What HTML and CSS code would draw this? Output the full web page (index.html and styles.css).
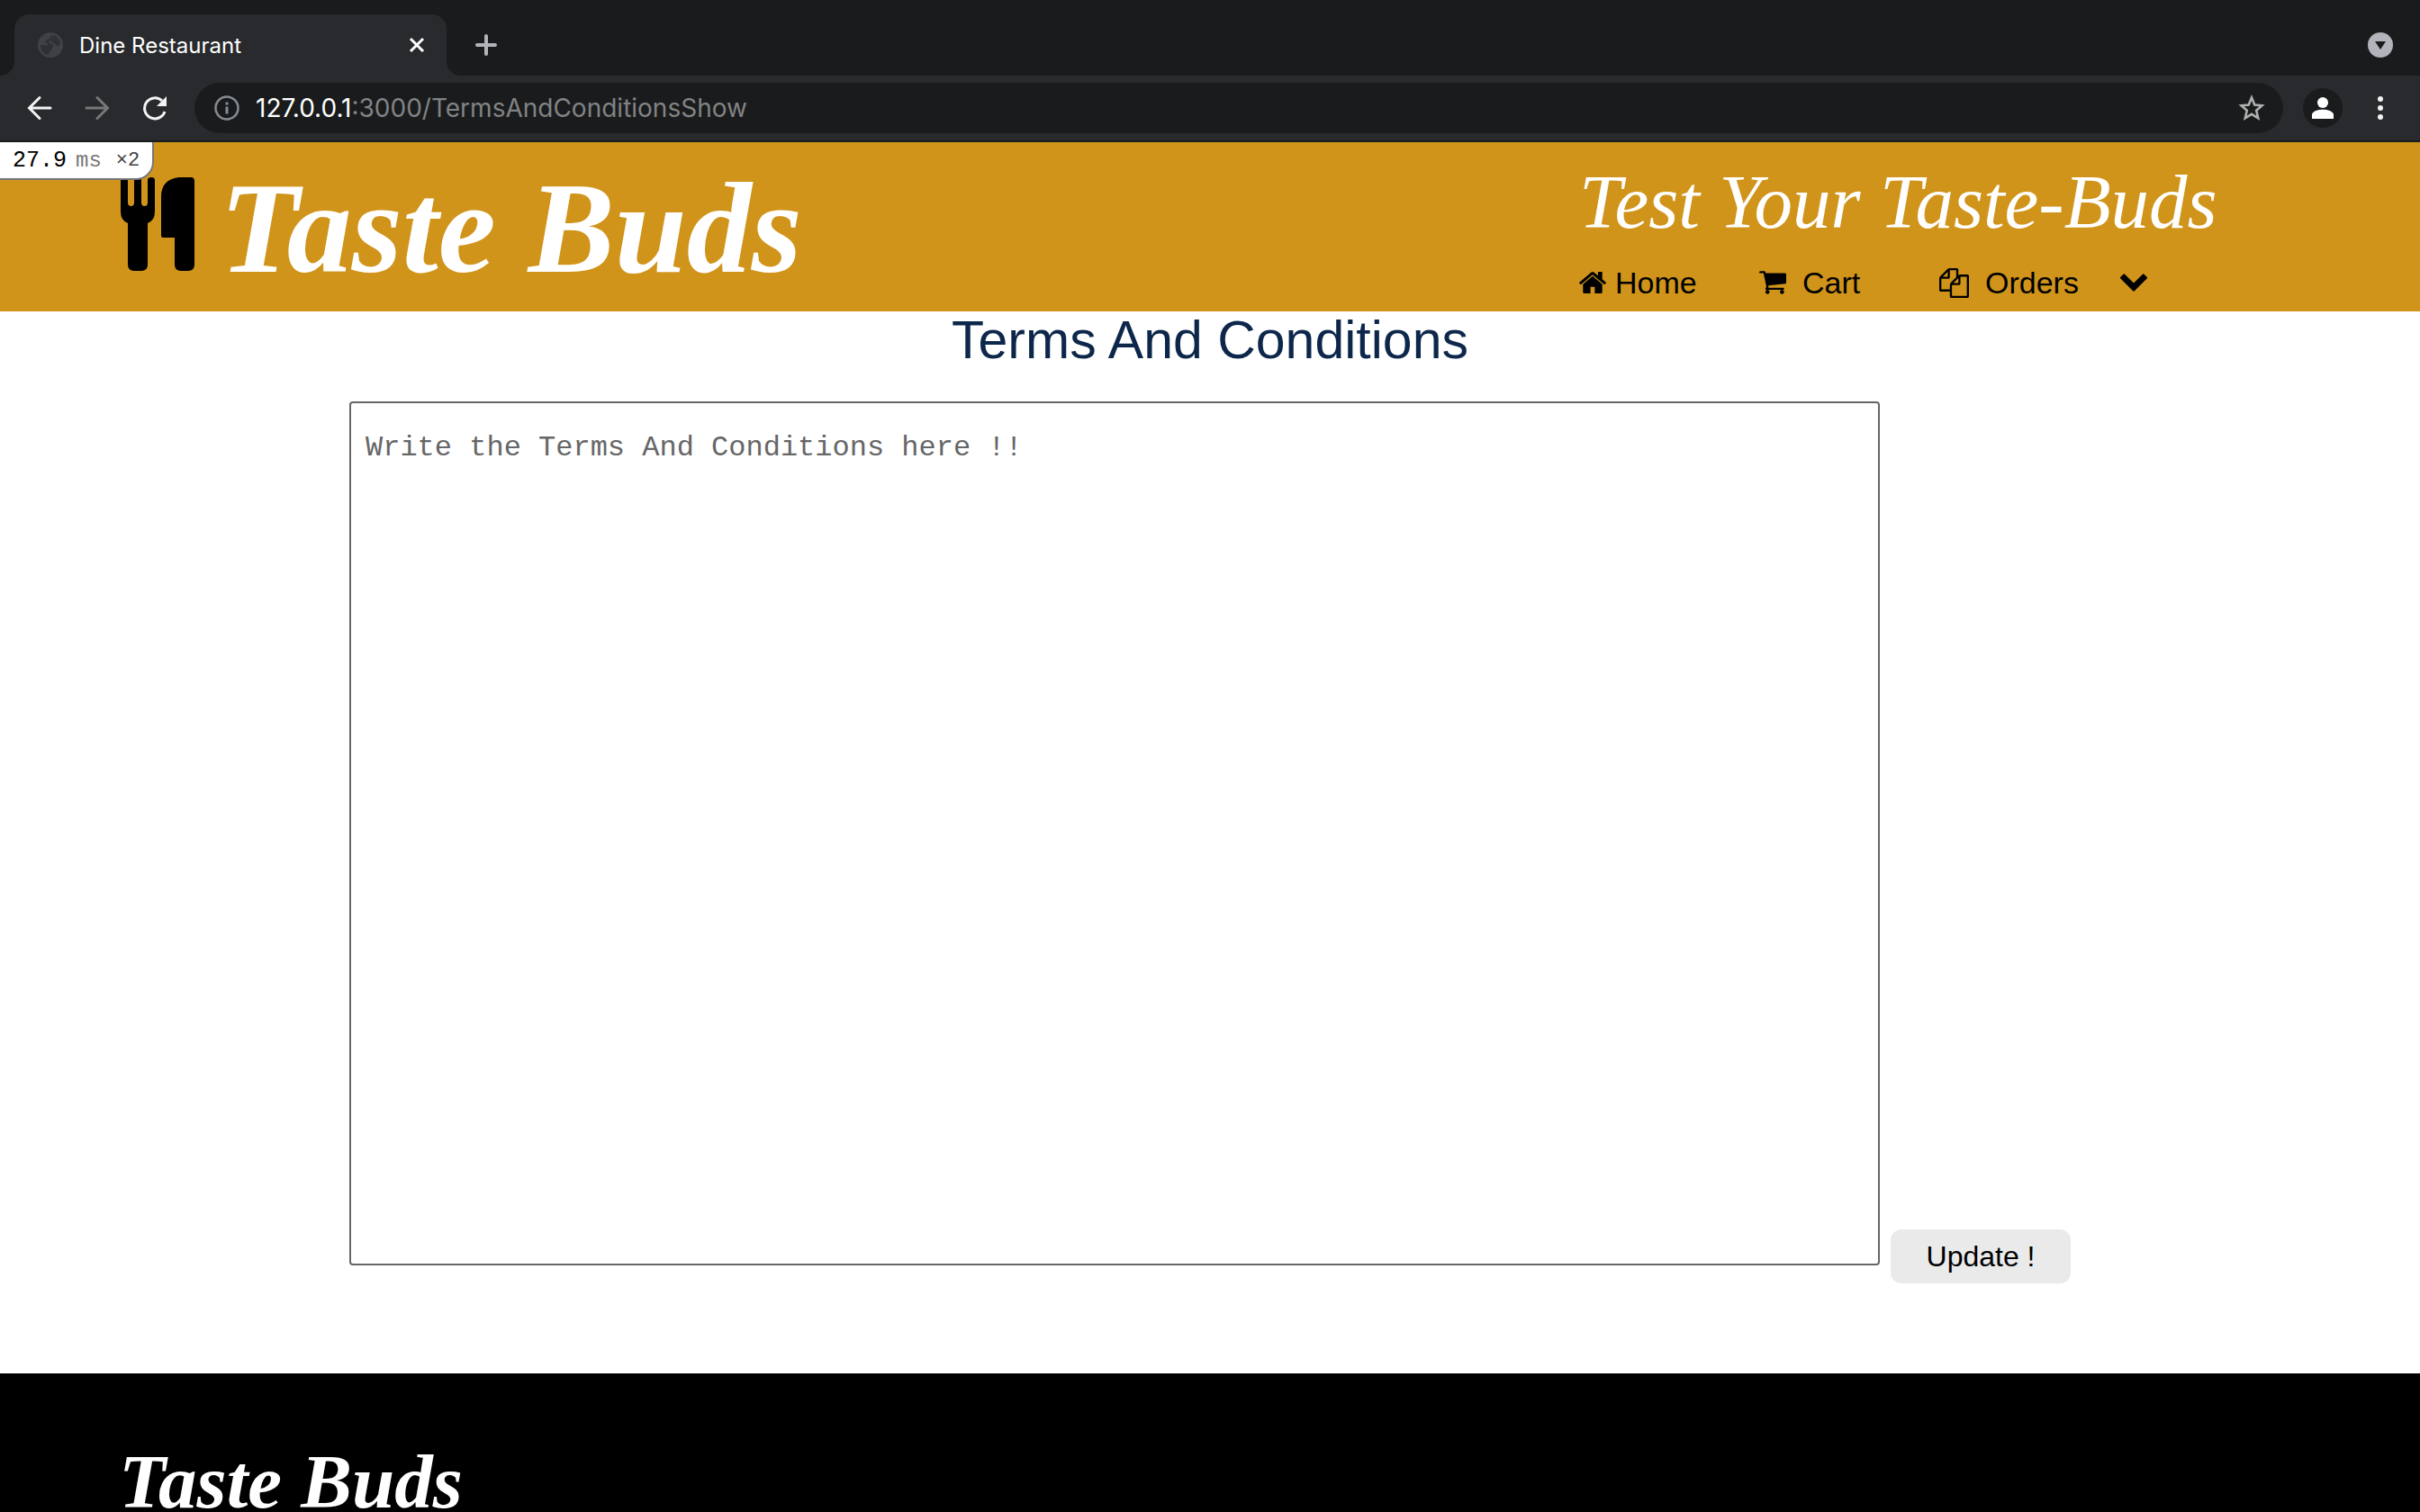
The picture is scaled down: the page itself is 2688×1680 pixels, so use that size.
FILE: index.html
```html
<!DOCTYPE html>
<html lang="en">
<head>
<meta charset="utf-8">
<title>Dine Restaurant</title>
<link rel="stylesheet" href="styles.css">
</head>
<body>
<div class="window">
  <div class="tabs">
    <div class="tab">
      <svg class="globe" viewBox="0 0 28 28" aria-hidden="true"><circle cx="14" cy="14" r="14" fill="#3f4146"/><path d="M17 3C15 6 18 7 16 9 14 10 12 9 12 11 13 13 17 12 17 15 17 18 14 17 14 19 14 21 12 22 12 25 6 24 3 19 3 14L9 14C11 14 11 16 12 15 13 13 9 13 9 10 9 7 13 8 14 6 14 4 14 3 17 3Z M3 14H10C12 14 12 16 14 16 17 17 16 20 14 20 12 21 13 23 11 25 6 24 3 19 3 14ZM17 3C21 4 25 8 25 13L23 15C20 16 20 13 18 12 15 12 15 9 17 8 18 7 16 5 17 3Z" fill="#292a2d" opacity=".7"/></svg>
      <span class="tab-title">Dine Restaurant</span>
      <button class="plain" aria-label="Close tab"><svg width="18" height="18" viewBox="0 0 18 18"><path d="M2 2L16 16M16 2L2 16" stroke="#fff" stroke-width="3"/></svg></button>
    </div>
    <button class="plain new-tab" aria-label="New tab"><svg width="24" height="24" viewBox="0 0 24 24"><path d="M12 2V22M2 12H22" stroke="#b1b4ba" stroke-width="4" stroke-linecap="round"/></svg></button>
    <button class="plain tab-search" aria-label="Search tabs"><svg width="28" height="28" viewBox="0 0 28 28"><circle cx="14" cy="14" r="14" fill="#b1b4ba"/><path d="M8 10H20L14 19Z" fill="#191b1c"/></svg></button>
  </div>
  <div class="toolbar">
    <button class="plain" aria-label="Back"><svg width="28" height="28" viewBox="0 0 28 28"><path d="M26 14H3M14 2.500L2.500 14L14 25.500" fill="none" stroke="#f1f3f4" stroke-width="3" stroke-linecap="round"/></svg></button>
    <button class="plain" aria-label="Forward"><svg width="28" height="28" viewBox="0 0 28 28"><path d="M2 14H25M14 2.500L25.500 14L14 25.500" fill="none" stroke="#777879" stroke-width="3" stroke-linecap="round"/></svg></button>
    <button class="plain" aria-label="Reload"><svg width="28" height="28" viewBox="0 0 28 28"><path d="M22 6A11.500 11.500 0 1 0 25 18" fill="none" stroke="#f1f3f4" stroke-width="3"/><path d="M27 1V12H16Z" fill="#f1f3f4"/></svg></button>
    <div class="address">
      <svg width="28" height="28" viewBox="0 0 28 28" aria-hidden="true"><circle cx="14" cy="14" r="12.500" fill="none" stroke="#868d94" stroke-width="2.500"/><path d="M12.500 7.500h3v3h-3zM12.500 12.500h3v8h-3z" fill="#868d94"/></svg>
      <span class="url"><span class="host">127.0.0.1</span>:3000/TermsAndConditionsShow</span>
      <button class="plain" aria-label="Bookmark"><svg width="30" height="30" viewBox="0 0 30 30"><path d="M15 3.500L18.300 11.500L26.500 12.200L20.200 17.800L22.200 26.300L15 21.800L7.800 26.300L9.800 17.800L3.500 12.200L11.700 11.500Z" fill="none" stroke="#b0b0b0" stroke-width="2.600"/></svg></button>
    </div>
    <button class="plain profile" aria-label="Profile"><svg width="24" height="24" viewBox="0 0 24 24"><circle cx="12" cy="6" r="6" fill="#fff"/><path d="M0 24V19C2 12 22 12 24 19V24Z" fill="#fff"/></svg></button>
    <button class="plain" aria-label="Menu"><svg width="28" height="28" viewBox="0 0 28 28" fill="#f1f3f4"><circle cx="14" cy="4" r="3"/><circle cx="14" cy="14" r="3"/><circle cx="14" cy="24" r="3"/></svg></button>
  </div>
  <div class="page">
    <div class="profiler">27.9<span class="unit">ms</span><span class="count">×2</span></div>
    <header class="header">
      <div class="brand">
        <svg class="cutlery" viewBox="0 0 82 114" aria-hidden="true"><path d="M0 3Q0 0 4 0T8 3V28Q8 32 11.500 32T15 28V3Q15 0 19 0T23 3V28Q23 32 26.500 32T30 28V3Q30 0 34 0T38 3V38Q38 48 30 51V97Q30 104 23 104H15Q8 104 8 97V51Q0 48 0 38Z"/><path d="M65 0H78Q82 0 82 4V97Q82 104 75 104H67Q60 104 60 97V67H47Q45 67 45 65V20Q46 2 65 0Z"/></svg>
        <span class="logo">Taste Buds</span>
      </div>
      <div class="side">
        <div class="tagline">Test Your Taste-Buds</div>
        <nav class="nav">
          <a href="#home" class="home"><svg width="30" height="24" viewBox="89 256 1614 1280" aria-hidden="true"><path d="M1472 992v480q0 26-19 45t-45 19h-384v-384h-256v384h-384q-26 0-45-19t-19-45v-480q0-1 .5-3t.5-3l575-474 575 474q1 2 1 6zm223-69l-62 74q-8 9-21 11h-3q-13 0-21-7l-692-577-692 577q-12 8-24 7-13-2-21-11l-62-74q-8-10-7-23.500t11-21.500l719-599q32-26 76-26t76 26l244 204v-195q0-14 9-23t23-9h192q14 0 23 9t9 23v408l219 182q10 8 11 21.500t-7 23.500z"/></svg>Home</a>
          <a href="#cart"><svg width="30" height="26" viewBox="64 256 1664 1408" aria-hidden="true"><path d="M704 1536q0 52-38 90t-90 38-90-38-38-90 38-90 90-38 90 38 38 90zm896 0q0 52-38 90t-90 38-90-38-38-90 38-90 90-38 90 38 38 90zm128-1088v512q0 24-16.500 42.500t-40.500 21.500l-1044 122q13 60 13 70 0 16-24 64h920q26 0 45 19t19 45-19 45-45 19h-1024q-26 0-45-19t-19-45q0-11 8-31.500t16-36 21.500-40 15.500-29.500l-177-823h-204q-26 0-45-19t-19-45 19-45 45-19h256q16 0 28.500 6.500t19.500 15.500 13 24.500 8 26 5.500 29.500 4.500 26h1201q26 0 45 19t19 45z"/></svg>Cart</a>
          <a href="#orders"><svg width="33" height="33" viewBox="0 0 1792 1792" aria-hidden="true"><path d="M1696 384q40 0 68 28t28 68v1216q0 40-28 68t-68 28h-960q-40 0-68-28t-28-68v-288h-544q-40 0-68-28t-28-68v-672q0-40 20-88t48-76l408-408q28-28 76-48t88-20h416q40 0 68 28t28 68v328q68-40 128-40h416zm-544 213l-299 299h299v-299zm-640-384l-299 299h299v-299zm196 647l316-316v-416h-384v416q0 40-28 68t-68 28h-416v640h512v-256q0-40 20-88t48-76zm956 804v-1152h-384v416q0 40-28 68t-68 28h-416v640h896z"/></svg>Orders</a>
          <button class="plain" aria-label="More"><svg width="30" height="20" viewBox="90 533 1612 1035"><path d="M1683 808l-742 741q-19 19-45 19t-45-19l-742-741q-19-19-19-45.500t19-45.500l166-165q19-19 45-19t45 19l531 531 531-531q19-19 45-19t45 19l166 165q19 19 19 45.500t-19 45.500z"/></svg></button>
        </nav>
      </div>
    </header>
    <main>
      <h1>Terms And Conditions</h1>
      <form class="terms">
        <textarea aria-label="Terms and conditions" placeholder="Write the Terms And Conditions here !!"></textarea>
        <button type="button" class="update">Update !</button>
      </form>
    </main>
    <footer class="footer"><span class="footer-logo">Taste Buds</span></footer>
  </div>
</div>
</body>
</html>
```

FILE: styles.css
```css
* { box-sizing: border-box; }
body { margin: 0; background: #fff; font-family: "Liberation Sans", Arial, sans-serif; }
.window { height: 100vh; display: flex; flex-direction: column; overflow: hidden; }
svg { display: block; flex: none; }
.plain { border: 0; padding: 0; background: none; display: flex; align-items: center; justify-content: center; }

.tabs { height: 84px; flex: none; padding: 16px 30px 0 16px; display: flex; align-items: center; background: #191b1c; font-family: Inter, sans-serif; }
.tab { position: relative; width: 480px; height: 68px; padding: 0 24px 0 26px; display: flex; align-items: center; border-radius: 16px 16px 0 0; background: #292a2d; color: #fff; }
.tab::before, .tab::after { content: ""; position: absolute; bottom: 0; width: 16px; height: 16px; }
.tab::before { right: 100%; background: radial-gradient(circle at 0 0, #191b1c 16px, #292a2d 16px); }
.tab::after { left: 100%; background: radial-gradient(circle at 100% 0, #191b1c 16px, #292a2d 16px); }
.globe { width: 28px; height: 28px; }
.tab-title { flex: 1; padding-left: 18px; font-size: 24px; }
.new-tab { margin-left: 32px; }
.tab-search { margin-left: auto; }

.toolbar { height: 74px; flex: none; padding: 0 30px; display: flex; align-items: center; gap: 36px; background: #292a2d; border-bottom: 2px solid #191b1c; font-family: Inter, sans-serif; }
.address { flex: 1; height: 56px; margin-left: -6px; margin-right: -14px; padding: 0 20px 0 22px; display: flex; align-items: center; border-radius: 28px; background: #191b1c; }
.url { flex: 1; padding-left: 18px; font-size: 28px; color: #828384; }
.host { color: #fff; }
.profile { width: 44px; height: 44px; border-radius: 50%; background: #191b1c; margin-right: -8px; }

.page { position: relative; flex: 1; overflow: hidden; }
.profiler { position: absolute; left: 0; top: 0; height: 42px; padding: 2px 14px 0; display: flex; align-items: center; border: solid #777; border-width: 0 2px 2px 0; border-radius: 0 0 20px 0; background: #fff; color: #000; font: 25px/38px "Liberation Mono", monospace; }
.unit { padding-left: 10px; font-size: 24px; color: #777; }
.count { padding-left: 16px; font-size: 22px; color: #444; }

.header { padding: 26px 0 12px 134px; display: grid; grid-template-columns: 1fr 934px; align-items: start; background: #d0941b; }
.brand { display: flex; align-items: center; gap: 28px; }
.cutlery { width: 82px; height: 114px; }
.logo, .footer-logo, .tagline { font-family: "Liberation Serif", "Times New Roman", cursive; font-style: italic; color: #fff; white-space: nowrap; }
.logo { font-size: 144px; line-height: 140px; font-weight: bold; }
.tagline { font-size: 85px; line-height: 80px; }
.nav { display: grid; grid-template-columns: 200px 200px 200px 32px; padding-top: 30px; }
.nav a { display: flex; align-items: center; gap: 18px; font-size: 34px; line-height: 40px; color: #000; text-decoration: none; }
.nav .home { gap: 10px; }

h1 { margin: 0; font-size: 59px; line-height: 64px; font-weight: normal; text-align: center; color: #0d274b; }
.terms { padding: 36px 388px 100px; display: flex; align-items: flex-end; gap: 12px; }
textarea { display: block; flex: 1; height: 960px; margin: 0 0 20px; padding: 32px 16px; border: 2px solid #666; border-radius: 4px; resize: none; background: #fff; font: 32px/36px "Liberation Mono", "Courier New", monospace; }
textarea::placeholder { color: #666; opacity: 1; }
.update { width: 200px; height: 60px; border: 0; border-radius: 12px; background: #eaeaea; color: #000; font: 32px "Liberation Sans", Arial, sans-serif; }
.footer { height: 400px; padding: 86px 132px; background: #000; }
.footer-logo { display: block; font-size: 85px; line-height: 68px; font-weight: bold; }
```
